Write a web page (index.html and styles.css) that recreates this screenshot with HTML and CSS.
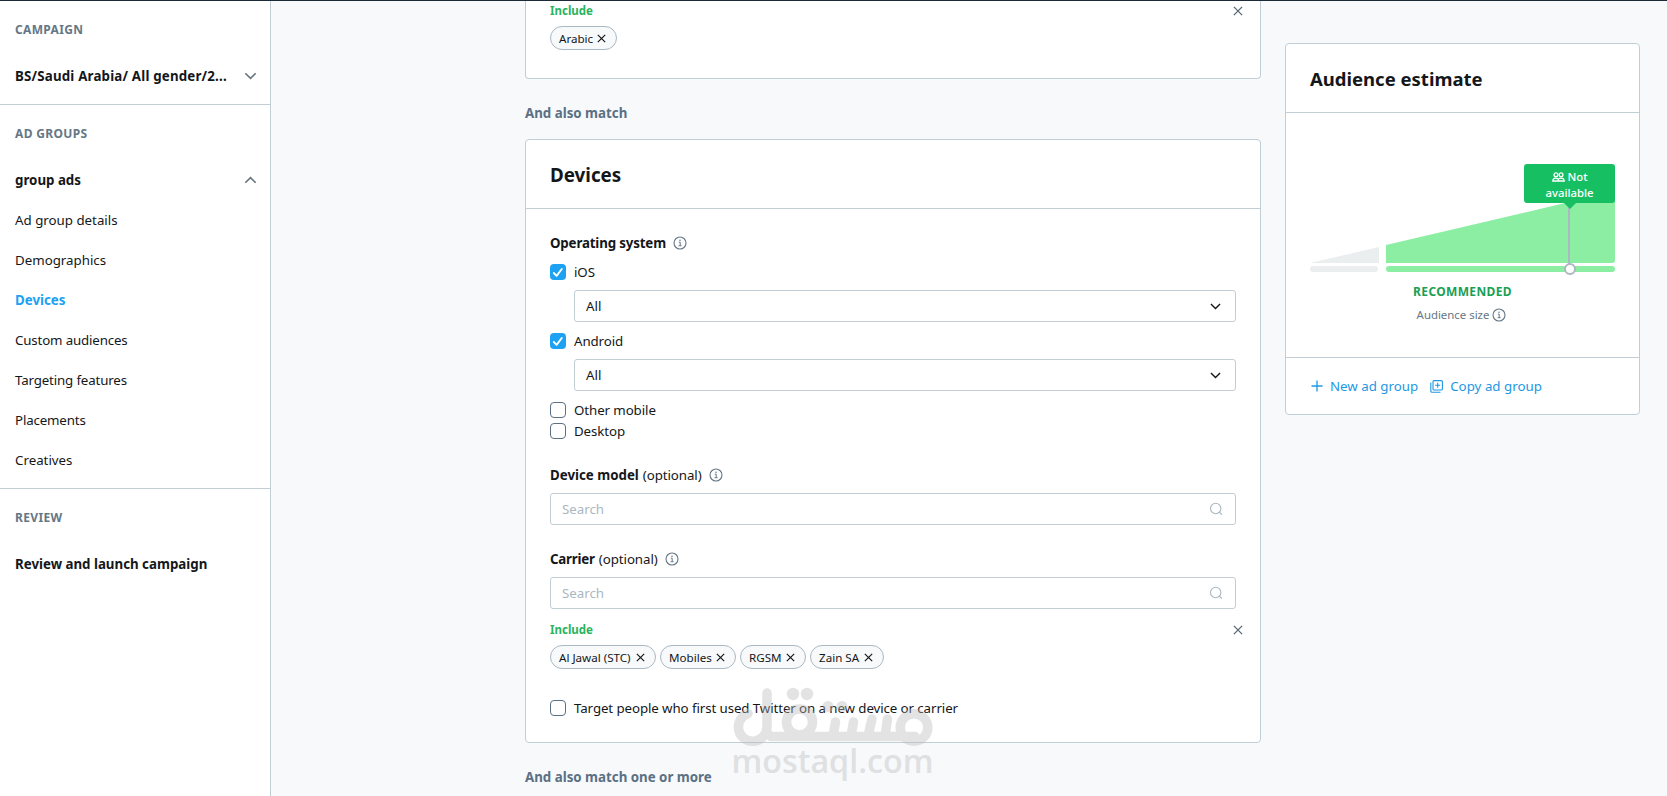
FILE: index.html
```html
<!DOCTYPE html>
<html lang="en">
<head>
<meta charset="utf-8">
<title>Devices</title>
<link rel="stylesheet" href="styles.css">
</head>
<body>
<svg class="defs" width="0" height="0">
  <symbol id="info" viewBox="0 0 14 14"><circle cx="7" cy="7" r="6" fill="none" stroke="currentColor" stroke-width="1.1"/><path d="M5.8 6.2H7.2V9.6M5.6 9.7H8.6" fill="none" stroke="currentColor" stroke-width="1"/><circle cx="7" cy="4.3" r=".8" fill="currentColor"/></symbol>
  <symbol id="x" viewBox="0 0 10 10"><path d="M.9.9 9.1 9.1M9.1.9.9 9.1" fill="none" stroke="currentColor" stroke-width="1.3"/></symbol>
  <symbol id="down" viewBox="0 0 12 8"><path d="M.8 1.2 6 6.4 11.2 1.2" fill="none" stroke="currentColor" stroke-width="1.6"/></symbol>
  <symbol id="search" viewBox="0 0 14 14"><circle cx="6.7" cy="6.5" r="5.2" fill="none" stroke="currentColor" stroke-width="1.1"/><path d="M9.8 9.8 13 12.6" stroke="currentColor" stroke-width="1.2"/></symbol>
  <symbol id="check" viewBox="0 0 16 16"><path d="M3.8 9 6.6 11.8 11.8 5" fill="none" stroke="#fff" stroke-width="1.9" stroke-linecap="round" stroke-linejoin="round"/></symbol>
</svg>
<div class="app">
  <nav class="sidebar">
    <section class="nav-section">
      <h6 class="nav-title">CAMPAIGN</h6>
      <a class="nav-head"><span class="name">BS/Saudi Arabia/ All gender/2...</span><svg class="chev"><use href="#down"/></svg></a>
    </section>
    <section class="nav-section groups">
      <h6 class="nav-title">AD GROUPS</h6>
      <a class="nav-head"><span>group ads</span><svg class="chev up"><use href="#down"/></svg></a>
      <a class="nav-item">Ad group details</a>
      <a class="nav-item">Demographics</a>
      <a class="nav-item active">Devices</a>
      <a class="nav-item tight">Custom audiences</a>
      <a class="nav-item tight">Targeting features</a>
      <a class="nav-item tight">Placements</a>
      <a class="nav-item">Creatives</a>
    </section>
    <section class="nav-section last">
      <h6 class="nav-title">REVIEW</h6>
      <a class="nav-head"><span>Review and launch campaign</span></a>
    </section>
  </nav>
  <main class="content">
    <div class="column">
      <section class="card first">
        <div class="include"><span>Include</span><svg class="close"><use href="#x"/></svg></div>
        <div class="chips"><span class="chip c-ar"><span>Arabic</span><svg><use href="#x"/></svg></span></div>
      </section>
      <p class="match">And also match</p>
      <section class="card devices">
        <header class="card-head"><h2>Devices</h2></header>
        <div class="card-body">
          <div class="label"><b class="l-os">Operating system</b><svg class="info"><use href="#info"/></svg></div>
          <label class="check ios"><span class="box on"><svg><use href="#check"/></svg></span><span>iOS</span></label>
          <div class="field select"><span>All</span><svg><use href="#down"/></svg></div>
          <label class="check android"><span class="box on"><svg><use href="#check"/></svg></span><span>Android</span></label>
          <div class="field select"><span>All</span><svg><use href="#down"/></svg></div>
          <label class="check other"><span class="box"></span><span>Other mobile</span></label>
          <label class="check desktop"><span class="box"></span><span>Desktop</span></label>
          <div class="label model"><b>Device model</b><span class="opt">(optional)</span><svg class="info"><use href="#info"/></svg></div>
          <div class="field search"><span>Search</span><svg><use href="#search"/></svg></div>
          <div class="label carrier"><b class="l-carrier">Carrier</b><span class="opt">(optional)</span><svg class="info"><use href="#info"/></svg></div>
          <div class="field search"><span>Search</span><svg><use href="#search"/></svg></div>
          <div class="include second"><span>Include</span><svg class="close"><use href="#x"/></svg></div>
          <div class="chips">
            <span class="chip c-stc"><span>Al Jawal (STC)</span><svg><use href="#x"/></svg></span>
            <span class="chip c-mob"><span>Mobiles</span><svg><use href="#x"/></svg></span>
            <span class="chip c-rg"><span>RGSM</span><svg><use href="#x"/></svg></span>
            <span class="chip c-zain"><span>Zain SA</span><svg><use href="#x"/></svg></span>
          </div>
          <label class="check target"><span class="box"></span><span>Target people who first used Twitter on a new device or carrier</span></label>
        </div>
      </section>
      <p class="match more">And also match one or more</p>
    </div>
    <aside class="card estimate">
      <header class="card-head"><h2 class="h-est">Audience estimate</h2></header>
      <div class="chart-area">
        <div class="chart">
          <svg width="305" height="82" viewBox="1310 193 305 82">
            <path d="M1310 263 1379 247V263Z" fill="#eaeeef"/>
            <rect x="1310" y="266" width="68" height="6" rx="3" fill="#eaeeef"/>
            <path d="M1386 245 1563 203.5 1605 193H1615V260Q1615 263 1612 263H1386Z" fill="#8ceea3"/>
            <rect x="1386" y="266" width="229" height="6" rx="3" fill="#8ceea3"/>
            <path d="M1569 203V265" stroke="#aab8c2" stroke-width="2"/>
            <circle cx="1570" cy="269" r="5" fill="#fff" stroke="#aab8c2" stroke-width="2"/>
          </svg>
          <div class="tip"><svg width="13" height="10" viewBox="0 0 14 11" fill="none" stroke="#fff" stroke-width="1.4"><circle cx="4.2" cy="3" r="2.1"/><circle cx="9.8" cy="3" r="2.1"/><path d="M.7 9.9C.9 7.6 2 6.8 4 6.8S7 7.6 7.2 9.9ZM7.2 7.5C7.8 7 8.7 6.8 10 6.8 12 6.8 13.1 7.6 13.3 9.9H7.2"/></svg> Not<br>available</div>
        </div>
        <div class="recommended">RECOMMENDED</div>
        <div class="size"><span>Audience size</span><svg class="info"><use href="#info"/></svg></div>
      </div>
      <footer class="actions">
        <a class="a-new"><svg width="12" height="12" viewBox="0 0 12 12"><path d="M6 .5V11.5M.5 6H11.5" stroke="currentColor" stroke-width="1.3"/></svg><span>New ad group</span></a>
        <a class="a-copy"><svg width="13" height="13" viewBox="0 0 13 13" fill="none" stroke="currentColor" stroke-width="1.1"><rect x="3" y=".6" width="9.4" height="9.4" rx="1"/><path d="M7.7 2.8V7.8M5.2 5.3H10.2M.8 2.5V11Q.8 12.3 2.1 12.3H10.5"/></svg><span>Copy ad group</span></a>
      </footer>
    </aside>
  </main>
</div>
<svg class="watermark" width="204" height="110" viewBox="732 686 204 110">
  <g fill="none" stroke="#bbb" stroke-width="9.5" stroke-linecap="round" stroke-linejoin="round">
    <path d="M767 693V727A14.300 14.300 0 1 1 748 713.500"/>
    <path d="M767 733 771 736.500H915"/>
    <circle cx="799.500" cy="722" r="13"/>
    <circle cx="914" cy="727.500" r="13.800"/>
    <path d="M833 736 835.500 722M851 736 853.500 722M868 736 872 719M885 736 887.500 719"/>
  </g>
  <g fill="#bbb"><circle cx="793" cy="694" r="6.200"/><circle cx="807" cy="694" r="6.200"/><circle cx="828" cy="706.500" r="5.500"/><circle cx="842" cy="706.500" r="5.500"/></g>
  <text x="731.500" y="773" fill="#bbb" textLength="202" lengthAdjust="spacingAndGlyphs">mostaql.com</text>
</svg>
</body>
</html>
```
FILE: styles.css
```css
* { box-sizing: border-box; }
body { margin: 0; height: 796px; overflow: hidden; background: #f7f9fb; color: #14171a; font: 13.3px/20px "Noto Sans", "Open Sans", sans-serif; }
h2, h6, p { margin: 0; }
svg { display: block; flex: none; }
.defs { position: absolute; }
.app { display: flex; height: 796px; border-top: 1px solid #1c2938; overflow: hidden; }
.sidebar { width: 271px; flex: none; background: #fff; border-right: 1px solid #c1ced6; }
.nav-section { padding: 19px 13px 0 15px; height: 104px; border-bottom: 1px solid #c1ced6; }
.nav-section.groups { height: 384px; }
.nav-section.last { border: 0; }
.nav-title { font-size: 12px; line-height: 20px; font-weight: 700; color: #657786; letter-spacing: .35px; }
.nav-head { display: flex; justify-content: space-between; align-items: center; height: 20px; margin-top: 26px; margin-bottom: 10px; font-weight: 700; white-space: nowrap; }
.name { letter-spacing: .19px; }
.chev { width: 13px; height: 8px; color: #66757f; }
.up { transform: rotate(180deg); }
.nav-item { display: block; height: 40px; line-height: 40px; }
.nav-item.active { color: #1da1f2; font-weight: 700; }
.tight { letter-spacing: -.15px; }
.content { display: flex; gap: 24px; padding-left: 254px; flex: 1; align-items: flex-start; }
.column { width: 736px; flex: none; }
.card { background: #fff; border: 1px solid #c1ced6; border-radius: 4px; }
.first { height: 78px; border-top: 0; border-radius: 0 0 4px 4px; padding: 0 17px 0 24px; }
.include { display: flex; justify-content: space-between; align-items: center; height: 20px; font-size: 11.5px; font-weight: 700; color: #28b35f; }
.close { width: 10px; height: 10px; color: #566675; }
.chips { display: flex; gap: 4px; margin-top: 5px; }
.chip { display: flex; align-items: center; justify-content: space-between; height: 24px; padding: 1px 10px 0 8px; border: 1px solid #aab8c2; border-radius: 12px; background: #f7f9fb; font-size: 11.6px; white-space: nowrap; }
.chip svg { width: 9px; height: 9px; }
.c-ar { width: 67px; }
.c-stc { width: 106px; }
.c-mob { width: 76px; }
.c-rg { width: 66px; }
.c-zain { width: 74px; }
.match { padding: 24px 0 16px; font-weight: 700; color: #5b7083; }
.card-head { height: 69px; padding: 21px 24px 0; border-bottom: 1px solid #c1ced6; }
.card-head h2 { font: 700 18.8px/28px "Noto Sans", sans-serif; }
.card-head .h-est { font-size: 18.5px; }
.devices { height: 604px; }
.card-body { padding: 24px 24px 0; }
.label { display: flex; align-items: center; height: 20px; }
.l-os { letter-spacing: -.15px; }
.l-carrier { letter-spacing: -.2px; }
.opt { margin-left: 4px; letter-spacing: -.08px; }
.info { width: 14px; height: 14px; color: #657786; }
.label .info { margin-left: 7px; }
.check { display: flex; align-items: center; gap: 8px; height: 16px; letter-spacing: -.09px; }
.box { width: 16px; height: 16px; border: 1px solid #5b7083; border-radius: 4px; flex: none; }
.box.on { border: 0; background: #1da1f2; }
.box svg { width: 16px; height: 16px; }
.ios { margin-top: 11px; }
.other { margin-top: 10px; }
.desktop { margin-top: 5px; }
.field { display: flex; align-items: center; justify-content: space-between; height: 32px; margin-top: 10px; padding: 0 12px 0 11px; border: 1px solid #c1ced6; border-radius: 3px; }
.select { margin-left: 24px; }
.select + .check { margin-top: 11px; }
.select svg { width: 11px; height: 7px; margin-right: 2px; }
.search { margin-top: 8px; color: #aab8c2; }
.search svg { width: 14px; height: 14px; }
.model { margin-top: 26px; }
.carrier { margin-top: 24px; }
.second { margin: 11px -7px 0 0; }
.target { margin-top: 31px; white-space: nowrap; }
.estimate { width: 355px; height: 372px; margin-top: 42px; flex: none; }
.chart-area { height: 245px; border-bottom: 1px solid #c1ced6; padding: 80px 24px 0; text-align: center; }
.chart { position: relative; height: 82px; }
.tip { position: absolute; right: 0; top: -29px; width: 91px; height: 39px; padding-top: 5px; border-radius: 3px; background: #17bf63; color: #fff; font-size: 11.3px; line-height: 16px; font-weight: 500; }
.tip::after { content: ""; position: absolute; left: 40px; top: 39px; border: 6px solid transparent; border-top-color: #17bf63; border-bottom: 0; }
.tip svg { display: inline; vertical-align: -1px; }
.recommended { width: 305px; margin-top: 7px; font-size: 12px; font-weight: 700; letter-spacing: .35px; color: #1a9f55; }
.size { display: flex; justify-content: center; align-items: center; gap: 3px; margin: 3px 0 0 -2px; font-size: 11.4px; color: #657786; }
.actions { display: flex; gap: 12px; padding: 18px 0 0 25px; color: #1d98e3; }
.actions a { display: flex; align-items: center; gap: 7px; white-space: nowrap; }
.a-copy { letter-spacing: .02px; }
.watermark { position: absolute; left: 732px; top: 686px; opacity: .4; overflow: visible; font: 600 33px "Open Sans", sans-serif; }
```
